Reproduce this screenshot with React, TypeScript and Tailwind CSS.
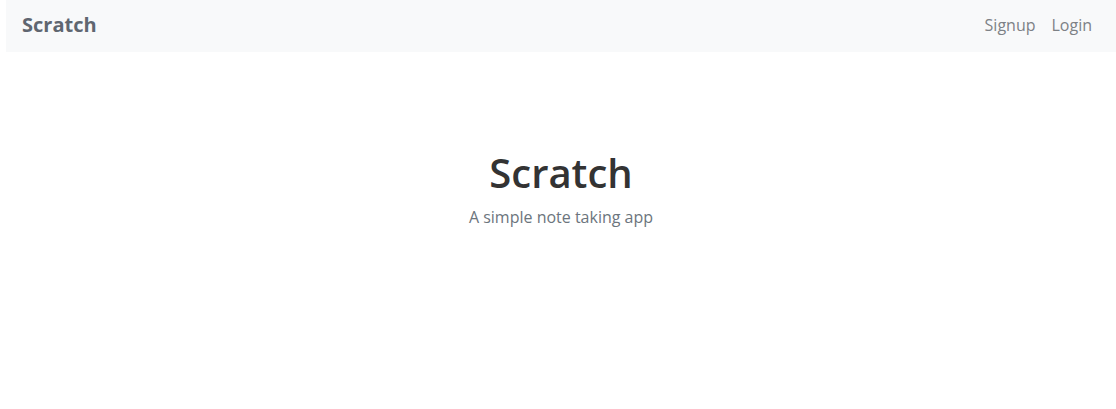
const App = () => {
  return (
    <div className="min-h-[409px] bg-white pl-[6px] font-['Open_Sans',sans-serif]">
      <nav className="flex h-[52px] items-center justify-between bg-[#f8f9fa] pl-4 pr-6">
        <a className="-mt-[2px] text-[20px] font-bold text-[#5f6670]">Scratch</a>
        <div className="-mt-[2px] flex items-center gap-4 text-[16px] text-[#7d8186]">
          <a>Signup</a>
          <a>Login</a>
        </div>
      </nav>
      <main className="flex flex-col items-center pt-[97px]">
        <h1 className="text-[40px] leading-[48px] font-semibold text-[#333]">
          Scratch
        </h1>
        <p className="mt-[8px] text-[16px] text-[#6c757d]">
          A simple note taking app
        </p>
      </main>
    </div>
  );
};

export default App;
